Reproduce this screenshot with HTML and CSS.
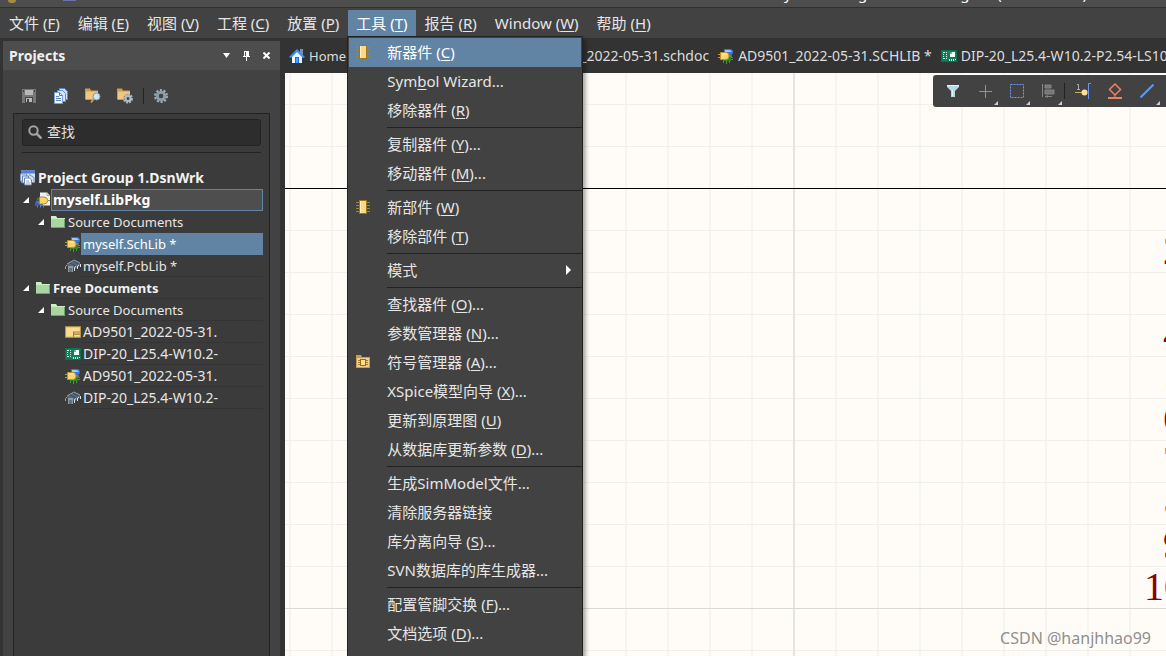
FILE: index.html
```html
<!DOCTYPE html>
<html lang="zh-CN">
<head>
<meta charset="utf-8">
<title>myself.LibPkg - Altium Designer</title>
<link rel="stylesheet" href="styles.css">
</head>
<body>
<svg class="sprite" aria-hidden="true">
  <defs>
    <symbol id="i-chip" viewBox="0 0 14 14">
      <path d="M0 2.500h14M0 5.500h14M0 8.500h14M0 11.500h14" stroke="#a58332"/>
      <path d="M3 0h8v14H3z" fill="#9b7426"/><path d="M4 1h6v12H4z" fill="#fbd983"/><path d="M4 1h1v12H4z" fill="#fff0c0"/>
    </symbol>
    <symbol id="i-symfolder" viewBox="0 0 14 14">
      <path d="M0 0h5l1 2h8v11H0z" fill="#c99a50"/><path d="M1 3h12v9H1z" fill="#f2cf8a"/>
      <path d="M2 5.500h10M2 7.500h10M2 9.500h10" stroke="#a67c32"/><path d="M4 4h6v7H4z" fill="#8f6a24"/><path d="M5 5h4v5H5z" fill="#ffe28d"/>
    </symbol>
    <symbol id="i-schlib" viewBox="0 0 16 16">
      <path d="M5 7h8v6H5z" fill="#2f8528"/><path d="M5.500 13v2M8.500 13v3M11.500 13v2M13 9.500h2M13 11.500h2" stroke="#3aa034"/>
      <path d="M6 1h6q3 0 3 3t-3 3H6z" fill="#3774dc"/><path d="M7 2h4q2 0 3 2H7z" fill="#9cc8ff"/>
      <path d="M0 6.500h3M0 9.500h3M11 8h3" stroke="#c69428"/><path d="M2.500 4.500H8q3 0 3 3.500T8 11.500H2.500z" fill="#fbd46b" stroke="#c2902b"/>
      <path d="M4 6h5" stroke="#fff0bb"/>
    </symbol>
    <symbol id="i-pcb" viewBox="0 0 16 12">
      <path d="M0 0h16v12H0z" fill="#08714d"/><path d="M1 1h14v10H1z" fill="#0b8159"/>
      <path d="M2.500 2v7M5.500 2v7" stroke="#d9f4e6" stroke-dasharray="1 1"/><path d="M3 2.500h2M3 8.500h2M8 9.500h7" stroke="#d9f4e6" stroke-dasharray="1 1"/>
      <path d="M9 2h5v5H9z" fill="#f6fff9"/><path d="M9 2h2v2H9z" fill="#5cb893"/><path d="M8 9h1v2H8zM10 9h1v2h-1zM12 9h1v2h-1z" fill="#eafff2"/>
    </symbol>
    <symbol id="i-pcblib" viewBox="0 0 16 14">
      <path d="M2 5l7-4 6 3v3l-5 3-2-1H3z" fill="#53687a"/><path d="M2 5l7-4 6 3" fill="none" stroke="#8fa3b3"/><path d="M5 4l6 3M8 2l6 3" stroke="#394b5b"/>
      <path d="M.500 10V7.500L2 6" fill="none" stroke="#9aa6b0"/>
      <path d="M3 7h5v6H3z" fill="#8f9aa3"/><path d="M4 9h3v4H4z" fill="#64717c"/>
      <path d="M9.500 12V8.500L11 7.500M12.500 10V7L14 6M15.500 8V5" fill="none" stroke="#dbe3e9"/>
    </symbol>
    <symbol id="i-home" viewBox="0 0 16 16">
      <path d="M11 1h3v6h-3z" fill="#8192a2"/><path d="M3 7l5-5 5 5v8H3z" fill="#eef5fb"/>
      <path d="M0 9l8-8 8 8-2 1-6-6-6 6z" fill="#3294ff"/><path d="M6 9h4v6H6z" fill="#1772dc"/><path d="M7 10h2v5H7z" fill="#49a4ff"/>
    </symbol>
    <symbol id="i-save" viewBox="0 0 14 14">
      <path d="M0 0h14v14H0z" fill="#777"/><path d="M3 1h8v5H3z" fill="#b8b8b8"/><path d="M1 1h1v2H1zM12 1h1v2h-1z" fill="#444"/>
      <path d="M3 8h8v6H3z" fill="#444"/><path d="M4 9h6v4H4z" fill="#bbb"/><path d="M5 10h2v3H5z" fill="#444"/>
    </symbol>
    <symbol id="i-docs" viewBox="0 0 14 16">
      <path d="M5.500.500h5l3 3v8h-8z" fill="#c8dcf3" stroke="#5f8ecb"/><path d="M3.500 2.500h5l3 3v8h-8z" fill="#d5e5f7" stroke="#6994cf"/>
      <path d="M.500 4.500h5l3 3v8h-8z" fill="#f2f8ff" stroke="#79a6db"/><path d="M5.500 4.500v3h3" fill="none" stroke="#4a79b8"/><path d="M2 8.500h3M2 10.500h5M2 12.500h5" stroke="#5b83b4"/>
    </symbol>
    <symbol id="i-foldsearch" viewBox="0 0 16 15">
      <path d="M0 0h5l1 2h7v9H0z" fill="#c89d58"/><path d="M1 3h12v8H1z" fill="#efc77f"/>
      <path d="M9 10l-3 4" stroke="#c89a55" stroke-width="2"/><circle cx="11.500" cy="8" r="3.500" fill="#c9e7f8" stroke="#8198a7"/>
    </symbol>
    <symbol id="i-foldgear" viewBox="0 0 16 15">
      <path d="M0 0h5l1 2h7v9H0z" fill="#c89d58"/><path d="M1 3h12v8H1z" fill="#efc77f"/>
      <circle cx="11" cy="10" r="4" fill="#4b4f51" stroke="#a9b4ba" stroke-width="2" stroke-dasharray="2 1"/><circle cx="11" cy="10" r="2.500" fill="#454545" stroke="#b5c0c6" stroke-width="2"/>
    </symbol>
    <symbol id="i-gear" viewBox="0 0 14 14">
      <circle cx="7" cy="7" r="5.500" fill="none" stroke="#9badb8" stroke-width="3" stroke-dasharray="2 1.450"/><circle cx="7" cy="7" r="3.800" fill="none" stroke="#8b9da8" stroke-width="3"/>
    </symbol>
    <symbol id="i-search" viewBox="0 0 14 14"><circle cx="5.500" cy="5.500" r="4.200" fill="none" stroke="#a3a3a3" stroke-width="2"/><path d="M8.500 8.500l5 5" stroke="#a3a3a3" stroke-width="2.500"/></symbol>
    <symbol id="i-group" viewBox="0 0 16 15">
      <path d="M1 0h14v12H1z" fill="#d4e0f4"/><path d="M1 0h14v3H1z" fill="#4c7fe0"/><path d="M.500 3.500h6v7h-6z" fill="#dce8f8" stroke="#7997bf"/>
      <path d="M2.500 5.500h6v7h-6z" fill="#edf3fb" stroke="#6783aa"/><path d="M4.500 7.500h5l2 2v5h-7z" fill="#fff" stroke="#6783aa"/><path d="M9 4l5 3v5" fill="none" stroke="#7790b4"/><path d="M6 10.500h3M6 12.500h4" stroke="#85a6cc"/>
    </symbol>
    <symbol id="i-libpkg" viewBox="0 0 16 15">
      <path d="M5 0h7l3 3v10H5z" fill="#eef1f7"/><path d="M12 0v3h3" fill="none" stroke="#a4aebd"/>
      <path d="M1 8h7v5H1z" fill="#2f68b6"/><path d="M2.500 13v2M5.500 13v2M8.500 13v2M0 10.500h1M0 12.500h1" stroke="#4c8ae0"/>
      <path d="M2 6.500h3M2 9.500h3M12 8h3" stroke="#b98624"/><path d="M4.500 4.500H9q3 0 4 3.500-1 3.500-4 3.500H4.500z" fill="#fbd46b" stroke="#b98624"/>
    </symbol>
    <symbol id="i-folder" viewBox="0 0 14 12"><path d="M0 0h5l1 2h8v10H0z" fill="#a8d79f"/><path d="M0 0h5l1 2h8v1H0z" fill="#c9efc3"/><path d="M13 3h1v9H0v-1h13z" fill="#70a56d"/></symbol>
    <symbol id="i-sch" viewBox="0 0 15 11"><path d="M.500.500h14v10H.500z" fill="#f9dc8c" stroke="#b49448"/><path d="M8 5.500h6M8 7.500h6M8 5v5" stroke="#a27e37"/></symbol>
    <symbol id="i-arrow" viewBox="0 0 6 6"><path d="M6 0v6H0z" fill="#fff"/></symbol>
    <symbol id="i-filter" viewBox="0 0 14 12"><path d="M1 0h12v2L9 6v6H5V6L1 2z" fill="#b4dbe5"/><path d="M1 .500h12" stroke="#e6f8fc"/><path d="M6.500 5v6" stroke="#e4f5fa"/></symbol>
    <symbol id="i-plus" viewBox="0 0 14 14"><path d="M7 1h1v13H7zM1 7h13v1H1z" fill="#6d95ee"/></symbol>
    <symbol id="i-select" viewBox="0 0 14 14"><path d="M.500.500h13v13H.500z" fill="none" stroke="#7298ef" stroke-dasharray="2 1"/></symbol>
    <symbol id="i-align" viewBox="0 0 14 14"><path d="M.500 0v13" stroke="#868686"/><path d="M3 1h6v3H3zM3 6h9v4H3z" fill="#777" stroke="#858585"/><path d="M3 12.500h7M5 11v3" stroke="#858585"/></symbol>
    <symbol id="i-pin" viewBox="0 0 16 16"><path d="M2 1.500h1.500V6M2 6.500h3" fill="none" stroke="#aaa"/><path d="M0 9.500h7" stroke="#d0ad67"/><circle cx="9.500" cy="9.500" r="3" fill="#ffe09b"/><path d="M16 .500h-2.500V16" fill="none" stroke="#6597ef"/></symbol>
    <symbol id="i-erc" viewBox="0 0 14 16"><path d="M7 1l5.500 5.500L7 12 1.500 6.500z" fill="none" stroke="#ee8164" stroke-width="1.500"/><path d="M0 14h14v2H0zM6.500 12h1v2h-1z" fill="#ee8164"/></symbol>
    <symbol id="i-line" viewBox="0 0 14 14"><path d="M.500 13.500l13-13" stroke="#5b9cec" stroke-width="2"/></symbol>
  </defs>
</svg>

<div class="app">
  <header class="titlebar">
    <span class="logo"></span><span class="quick"></span>
    <span class="title">myself.LibPkg - Altium Designer (20.2.6.2440)</span>
  </header>

  <nav class="menubar">
    <button class="menu">文件 (<u>F</u>)</button>
    <button class="menu">编辑 (<u>E</u>)</button>
    <button class="menu">视图 (<u>V</u>)</button>
    <button class="menu">工程 (<u>C</u>)</button>
    <button class="menu">放置 (<u>P</u>)</button>
    <div class="menu-open">
      <button class="menu active">工具 (<u>T</u>)</button>
      <ul class="dropdown">
        <li><button class="entry active"><svg class="s14"><use href="#i-chip"/></svg><span>新器件 (<u>C</u>)</span></button></li>
        <li><button class="entry"><span>Sym<u>b</u>ol Wizard...</span></button></li>
        <li><button class="entry"><span>移除器件 (<u>R</u>)</span></button></li>
        <li class="divider"></li>
        <li><button class="entry"><span>复制器件 (<u>Y</u>)...</span></button></li>
        <li><button class="entry"><span>移动器件 (<u>M</u>)...</span></button></li>
        <li class="divider"></li>
        <li><button class="entry"><svg class="s14"><use href="#i-chip"/></svg><span>新部件 (<u>W</u>)</span></button></li>
        <li><button class="entry"><span>移除部件 (<u>T</u>)</span></button></li>
        <li class="divider"></li>
        <li><button class="entry sub"><span>模式</span></button></li>
        <li class="divider"></li>
        <li><button class="entry"><span>查找器件 (<u>O</u>)...</span></button></li>
        <li><button class="entry"><span>参数管理器 (<u>N</u>)...</span></button></li>
        <li><button class="entry"><svg class="s14"><use href="#i-symfolder"/></svg><span>符号管理器 (<u>A</u>)...</span></button></li>
        <li><button class="entry"><span>XSpice模型向导 (<u>X</u>)...</span></button></li>
        <li><button class="entry"><span>更新到原理图 (<u>U</u>)</span></button></li>
        <li><button class="entry"><span>从数据库更新参数 (<u>D</u>)...</span></button></li>
        <li class="divider"></li>
        <li><button class="entry"><span>生成SimModel文件...</span></button></li>
        <li><button class="entry"><span>清除服务器链接</span></button></li>
        <li><button class="entry"><span>库分离向导 (<u>S</u>)...</span></button></li>
        <li><button class="entry"><span>SVN数据库的库生成器...</span></button></li>
        <li class="divider"></li>
        <li><button class="entry"><span>配置管脚交换 (<u>F</u>)...</span></button></li>
        <li><button class="entry"><span>文档选项 (<u>D</u>)...</span></button></li>
      </ul>
    </div>
    <button class="menu">报告 (<u>R</u>)</button>
    <button class="menu">Window (<u>W</u>)</button>
    <button class="menu">帮助 (<u>H</u>)</button>
  </nav>

  <div class="workspace">
    <aside class="panel">
      <div class="panel-head">
        <h2>Projects</h2>
        <button class="head-btn" aria-label="Menu"><svg width="7" height="5"><path d="M0 0h7L3.500 5z" fill="#fff"/></svg></button>
        <button class="head-btn" aria-label="Pin"><svg width="7" height="10"><path d="M1 0h5v5h1v1H4v4H3V6H0V5h1z" fill="#fff"/><path d="M2 1h1v4H2z" fill="#4d4d4d"/></svg></button>
        <button class="head-btn" aria-label="Close"><svg width="7" height="7"><path d="M.500.500l6 6M6.500.500l-6 6" stroke="#fff" stroke-width="2"/></svg></button>
      </div>
      <div class="panel-tools">
        <button class="tool" aria-label="Save"><svg class="s14"><use href="#i-save"/></svg></button>
        <button class="tool" aria-label="Documents"><svg class="s16"><use href="#i-docs"/></svg></button>
        <button class="tool" aria-label="Find in project"><svg class="s16"><use href="#i-foldsearch"/></svg></button>
        <button class="tool" aria-label="Project options"><svg class="s16"><use href="#i-foldgear"/></svg></button>
        <span class="rule"></span>
        <button class="tool" aria-label="Settings"><svg class="s14"><use href="#i-gear"/></svg></button>
      </div>
      <div class="panel-box">
        <label class="search"><svg class="s14"><use href="#i-search"/></svg><input type="text" placeholder="查找" aria-label="查找"></label>
        <ul class="tree">
          <li class="row root"><svg class="s16"><use href="#i-group"/></svg><span class="name bold large">Project Group 1.DsnWrk</span></li>
          <li class="row l1"><svg class="arrow"><use href="#i-arrow"/></svg><svg class="s16"><use href="#i-libpkg"/></svg><span class="name bold large focused">myself.LibPkg</span></li>
          <li class="row l2"><svg class="arrow"><use href="#i-arrow"/></svg><svg class="folder"><use href="#i-folder"/></svg><span class="name">Source Documents</span></li>
          <li class="row l3"><svg class="s16"><use href="#i-schlib"/></svg><span class="name selected">myself.SchLib *</span></li>
          <li class="row l3"><svg class="s16"><use href="#i-pcblib"/></svg><span class="name line">myself.PcbLib *</span></li>
          <li class="row l1"><svg class="arrow"><use href="#i-arrow"/></svg><svg class="folder"><use href="#i-folder"/></svg><span class="name bold line">Free Documents</span></li>
          <li class="row l2"><svg class="arrow"><use href="#i-arrow"/></svg><svg class="folder"><use href="#i-folder"/></svg><span class="name line">Source Documents</span></li>
          <li class="row l3"><svg class="s16"><use href="#i-sch"/></svg><span class="name large line">AD9501_2022-05-31.</span></li>
          <li class="row l3"><svg class="s16"><use href="#i-pcb"/></svg><span class="name large line">DIP-20_L25.4-W10.2-</span></li>
          <li class="row l3"><svg class="s16"><use href="#i-schlib"/></svg><span class="name large line">AD9501_2022-05-31.</span></li>
          <li class="row l3"><svg class="s16"><use href="#i-pcblib"/></svg><span class="name large line">DIP-20_L25.4-W10.2-</span></li>
        </ul>
      </div>
    </aside>

    <main class="editor">
      <div class="tabs">
        <button class="tab home"><svg class="s16"><use href="#i-home"/></svg>Home</button>
        <button class="tab wide"><svg class="s16"><use href="#i-schlib"/></svg>myself.SchLib *</button>
        <button class="tab"><svg class="s16"><use href="#i-sch"/></svg>AD9501_2022-05-31.schdoc</button>
        <button class="tab"><svg class="s16"><use href="#i-schlib"/></svg>AD9501_2022-05-31.SCHLIB *</button>
        <button class="tab"><svg class="s16"><use href="#i-pcb"/></svg>DIP-20_L25.4-W10.2-P2.54-LS10</button>
      </div>
      <div class="canvas">
        <svg class="sheet">
          <defs>
            <pattern id="grid" x="4" y="31" width="42" height="42" patternUnits="userSpaceOnUse">
              <rect width="2" height="42" fill="#f5f4f0"/><rect width="42" height="1" fill="#efefeb"/>
            </pattern>
          </defs>
          <rect width="100%" height="100%" fill="url(#grid)"/>
          <rect x="508" width="2" height="100%" fill="#e4e4e1"/>
          <rect y="535" width="100%" height="1" fill="#d8d9d5"/>
          <rect y="115" width="100%" height="1" fill="#000"/>
          <g class="pins">
            <text x="878" y="191">2</text><text x="878" y="275">4</text><text x="879" y="317">5</text>
            <text x="878" y="359">6</text><text x="878" y="401">7</text><text x="879" y="443">8</text><text x="878" y="485">9</text><text x="859" y="527">10</text>
          </g>
        </svg>
        <div class="floatbar">
          <button class="tool" aria-label="Filter"><svg class="s14"><use href="#i-filter"/></svg></button>
          <button class="tool more" aria-label="Move"><svg class="s14"><use href="#i-plus"/></svg></button>
          <button class="tool more" aria-label="Select"><svg class="s14"><use href="#i-select"/></svg></button>
          <button class="tool more" aria-label="Align"><svg class="s14"><use href="#i-align"/></svg></button>
          <span class="rule"></span>
          <button class="tool" aria-label="Pin"><svg class="s16"><use href="#i-pin"/></svg></button>
          <button class="tool" aria-label="Directive"><svg class="s16"><use href="#i-erc"/></svg></button>
          <button class="tool more" aria-label="Line"><svg class="s14"><use href="#i-line"/></svg></button>
        </div>
        <span class="credit">CSDN @hanjhhao99</span>
      </div>
    </main>
  </div>
</div>
</body>
</html>
```
FILE: styles.css
```css
* { box-sizing: border-box; }
body {
  margin: 0;
  overflow: hidden;
  background: #333;
  color: #e6e6e6;
  font: 13px/22px "Noto Sans", "Noto Sans CJK SC", sans-serif;
}
ul { list-style: none; margin: 0; padding: 0; }
button, input { font: inherit; color: inherit; background: none; border: 0; padding: 0; margin: 0; }
button { white-space: nowrap; }
svg { display: block; flex: none; }
u { text-underline-offset: 2px; text-decoration-thickness: 1px; }
.sprite { position: absolute; width: 0; height: 0; }
.s14 { width: 14px; height: 14px; }
.s16 { width: 16px; height: 16px; }

.app { display: flex; flex-direction: column; height: 100vh; }

.titlebar {
  display: flex;
  align-items: flex-end;
  height: 8px;
  flex: none;
  overflow: hidden;
  background: #4d4d4d;
  border-bottom: 1px solid #303030;
  font-size: 15px;
  line-height: 28px;
}
.logo { width: 8px; height: 3px; margin: 0 0 4px 8px; background: #a68a45; border-radius: 0 0 4px 4px; }
.quick { width: 13px; height: 1px; margin: 0 0 6px 47px; background: #6674a8; }
.title { margin-left: auto; margin-right: 79px; color: #fff; }

.menubar {
  display: flex;
  flex: none;
  gap: 2px;
  height: 30px;
  padding: 2px 0 2px 1px;
  background: #424242;
  font-size: 15px;
  position: relative;
  z-index: 2;
}
.menu { padding: 0 8px; height: 26px; line-height: 26px; }
.menu.active { background: #6184a4; color: #fff; }
.menu-open { position: relative; margin: 0 -1px; }

.dropdown {
  position: absolute;
  top: 26px;
  left: -1px;
  width: 236px;
  padding: 1px 1px 32px;
  background: #424242;
  border: 1px solid #222;
  box-shadow: 3px 3px 4px rgba(0, 0, 0, .3);
}
.entry {
  display: flex;
  align-items: center;
  width: 100%;
  height: 29px;
  padding: 0 0 2px 38px;
}
.entry svg { margin-left: -31px; margin-right: 17px; }
.entry.active { background: #6184a4; color: #fff; }
.entry.sub::after {
  content: "";
  margin-left: auto;
  margin-right: 10px;
  border: 5px solid transparent;
  border-left-color: #fff;
  border-right-width: 0;
}
.divider { height: 1px; margin: 2px -1px 2px 38px; background: #222; }

.workspace { display: flex; flex: 1; min-height: 0; gap: 5px; padding-left: 3px; }
.panel { display: flex; flex-direction: column; flex: none; width: 277px; margin-top: 3px; background: #424242; }
.panel-head { display: flex; align-items: center; gap: 12px; height: 29px; padding: 0 10px 0 6px; background: #4d4d4d; }
.panel-head h2 { margin: 0 auto 0 0; font-size: 14px; font-weight: 700; color: #f0f0f0; }
.head-btn { display: flex; align-items: center; height: 20px; }
.head-btn + .head-btn { margin-left: 1px; }
.panel-tools { display: flex; align-items: center; height: 32px; margin: 10px 0 1px; padding-left: 10px; }
.tool { display: flex; align-items: center; justify-content: center; width: 32px; height: 32px; position: relative; }
.rule { width: 1px; height: 16px; background: #222; margin: 0 1px 0 2px; }
.panel-box { flex: 1; margin: 0 10px; padding: 5px 5px 0; background: #3b3b3b; border: 1px solid #222; border-bottom: 0; }
.search {
  display: flex;
  align-items: center;
  gap: 5px;
  height: 27px;
  margin: 0 3px 6px;
  padding: 0 0 2px 5px;
  background: #2d2d2d;
  border: 1px solid #222;
  border-radius: 3px;
}
.search input { flex: 1; min-width: 0; font-size: 14px; outline: none; }
.search input::placeholder { color: #e0e0e0; opacity: 1; }
.tree { margin: 0 3px; padding-top: 14px; border-top: 1px solid #222; }
.row { display: flex; height: 22px; align-items: center; margin-right: -2px; }
.root { margin-left: -2px; }
.l1 { padding-left: 1px; }
.l2 { padding-left: 16px; }
.l3 { padding-left: 43px; }
.arrow { width: 6px; height: 6px; margin-right: 6px; }
.folder { width: 14px; height: 12px; margin: 0 1px; }
.name { flex: 1; height: 22px; line-height: 22px; padding-left: 2px; white-space: nowrap; color: #e6e6e6; }
.bold { font-weight: 700; color: #f2f2f2; }
.large { font-size: 14px; }
.line { box-shadow: inset 0 -1px #343434; }
.focused { background: #4e4e4e; outline: 1px solid #6184a4; outline-offset: -1px; color: #fff; }
.selected { background: #6184a4; color: #fff; }

.editor { display: flex; flex-direction: column; flex: 1; min-width: 0; }
.tabs { display: flex; flex: none; height: 35px; padding-left: 4px; gap: 9px; overflow: hidden; font-size: 14px; }
.tab { display: flex; align-items: center; gap: 4px; flex: none; color: #dcdcdc; }
.home { font-size: 13px; }
.wide { width: 145px; }
.canvas { position: relative; flex: 1; min-height: 0; overflow: hidden; background: #fffcf7; }
.sheet { width: 100%; height: 100%; }
.pins { font: 40px "Liberation Serif", serif; fill: #8b0000; }
.floatbar {
  position: absolute;
  top: 2px;
  right: 0;
  display: flex;
  align-items: center;
  height: 32px;
  padding: 0 3px 0 4px;
  background: #424242;
  border-radius: 3px 0 0 3px;
}
.floatbar .rule { margin: 0 2px 0 -1px; }
.more::after {
  content: "";
  position: absolute;
  right: 3px;
  bottom: 2px;
  border: 2px solid #d0d0d0;
  border-top-color: transparent;
  border-left-color: transparent;
}
.credit { position: absolute; right: 15px; bottom: 6px; font-size: 16px; line-height: 24px; color: #8f8f8f; }
```
